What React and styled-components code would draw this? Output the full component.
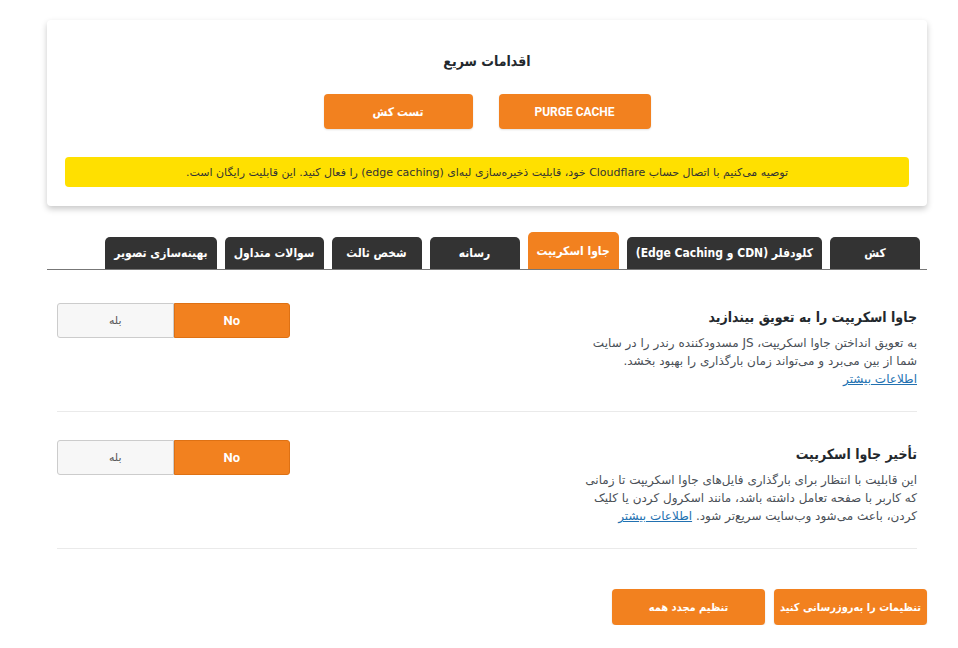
import React, { useState } from 'react';
import styled, { createGlobalStyle } from 'styled-components';

const GlobalStyle = createGlobalStyle`
    body {
        margin: 0;
        background: #ffffff;
        font-family: "DejaVu Sans", "Noto Sans", sans-serif;
    }
`;

const orange = '#f2811f';
const heading = '"DejaVu Sans Condensed", "DejaVu Sans", sans-serif';

const Page = styled.div`
    width: 880px;
    margin: 0 0 0 47px;
    padding-top: 20px;
    direction: rtl;
`;

const Card = styled.section`
    background: #fff;
    border-radius: 4px;
    box-shadow: 0 3px 6px rgba(0, 0, 0, 0.22);
    padding: 31px 18px 19px;
    display: flex;
    flex-direction: column;
    align-items: center;
`;

const CardTitle = styled.h2`
    margin: 0;
    font-family: ${heading};
    font-size: 14px;
    line-height: 20px;
    font-weight: bold;
    color: #23282d;
`;

const ActionRow = styled.div`
    display: flex;
    gap: 26px;
    margin-top: 23px;
`;

const ActionButton = styled.button`
    width: ${p => p.$w || 152}px;
    height: 35px;
    border: none;
    border-radius: 4px;
    background: ${orange};
    color: #fff;
    font-family: "Roboto", ${heading};
    font-weight: bold;
    font-size: 12px;
    box-shadow: 0 1px 2px rgba(0, 0, 0, 0.12);
    cursor: pointer;
`;

const Notice = styled.div`
    align-self: stretch;
    margin-top: 28px;
    height: 30px;
    background: #ffe000;
    border-radius: 4px;
    display: flex;
    align-items: center;
    justify-content: center;
    font-size: 11px;
    color: #333;
`;

const Tabs = styled.nav`
    margin-top: 26px;
    display: flex;
    align-items: flex-end;
    gap: 8px;
    padding-right: 7px;
    border-bottom: 1px solid #777;
`;

const Tab = styled.button`
    min-width: 90px;
    height: ${p => (p.$active ? 37 : 32)}px;
    padding: 0 9px;
    border: none;
    border-radius: 5px 5px 0 0;
    background: ${p => (p.$active ? orange : '#333333')};
    color: #fff;
    font-family: ${heading};
    font-weight: bold;
    font-size: 12px;
    white-space: nowrap;
    cursor: pointer;
`;

const Settings = styled.div`
    padding-top: 5px;
`;

const Row = styled.div`
    margin: 0 10px;
    padding: 28px 0 23px;
    border-bottom: 1px solid #eaeaea;
    display: flex;
    justify-content: space-between;
    align-items: flex-start;
`;

const Info = styled.div`
    width: 360px;
    padding-top: 4px;
`;

const Title = styled.h3`
    margin: 0;
    font-family: ${heading};
    font-size: 14px;
    line-height: 20px;
    font-weight: bold;
    color: #23282d;
`;

const Desc = styled.p`
    margin: 7px 0 0;
    font-size: 12px;
    line-height: 18px;
    color: #4a5057;
`;

const More = styled.a`
    color: #2271b1;
    text-decoration: underline;
`;

const Toggle = styled.div`
    display: flex;
    width: 233px;
    height: 35px;
`;

const ToggleHalf = styled.button`
    flex: 1;
    border: 1px solid ${p => (p.$on ? '#de7114' : '#cccccc')};
    border-radius: ${p => (p.$first ? '0 3px 3px 0' : '3px 0 0 3px')};
    background: ${p => (p.$on ? orange : '#f7f7f7')};
    color: ${p => (p.$on ? '#fff' : '#555')};
    font-family: "Roboto", "DejaVu Sans", sans-serif;
    font-weight: ${p => (p.$on ? 'bold' : 'normal')};
    font-size: ${p => (p.$on ? 13 : 11)}px;
    cursor: pointer;
`;

const Footer = styled.div`
    display: flex;
    gap: 9px;
    margin-top: 40px;
`;

const FooterButton = styled.button`
    width: 153px;
    height: 36px;
    padding: 0;
    border: none;
    border-radius: 4px;
    background: ${orange};
    color: #fff;
    font-family: ${heading};
    font-weight: bold;
    font-size: 11px;
    white-space: nowrap;
    box-shadow: 0 1px 2px rgba(0, 0, 0, 0.12);
    cursor: pointer;
`;

const tabs = [
    'کش',
    'کلودفلر (CDN و Edge Caching)',
    'جاوا اسکریپت',
    'رسانه',
    'شخص ثالث',
    'سوالات متداول',
    'بهینه‌سازی تصویر',
];

const SwitchField = ({ value, onChange }) => (
    <Toggle>
        <ToggleHalf $first $on={!value} onClick={() => onChange(false)}>No</ToggleHalf>
        <ToggleHalf $on={value} onClick={() => onChange(true)}>بله</ToggleHalf>
    </Toggle>
);

const App = () => {
    const [active, setActive] = useState(2);
    const [defer, setDefer] = useState(false);
    const [delay, setDelay] = useState(false);

    return <>
        <GlobalStyle />
        <Page>
            <Card>
                <CardTitle>اقدامات سریع</CardTitle>
                <ActionRow>
                    <ActionButton $w={152}>PURGE CACHE</ActionButton>
                    <ActionButton $w={149}>تست کش</ActionButton>
                </ActionRow>
                <Notice>توصیه می‌کنیم با اتصال حساب Cloudflare خود، قابلیت ذخیره‌سازی لبه‌ای (edge caching) را فعال کنید. این قابلیت رایگان است.</Notice>
            </Card>

            <Tabs>
                {tabs.map((t, i) => (
                    <Tab key={t} $active={i === active} onClick={() => setActive(i)}>{t}</Tab>
                ))}
            </Tabs>

            <Settings>
                <Row>
                    <Info>
                        <Title>جاوا اسکریپت را به تعویق بیندازید</Title>
                        <Desc>
                            به تعویق انداختن جاوا اسکریپت، JS مسدودکننده رندر را در سایت
                            <br />
                            شما از بین می‌برد و می‌تواند زمان بارگذاری را بهبود بخشد.
                            <br />
                            <More href="#">اطلاعات بیشتر</More>
                        </Desc>
                    </Info>
                    <SwitchField value={defer} onChange={setDefer} />
                </Row>
                <Row>
                    <Info>
                        <Title>تأخیر جاوا اسکریپت</Title>
                        <Desc>
                            این قابلیت با انتظار برای بارگذاری فایل‌های جاوا اسکریپت تا زمانی
                            <br />
                            که کاربر با صفحه تعامل داشته باشد، مانند اسکرول کردن یا کلیک
                            <br />
                            کردن، باعث می‌شود وب‌سایت سریع‌تر شود. <More href="#">اطلاعات بیشتر</More>
                        </Desc>
                    </Info>
                    <SwitchField value={delay} onChange={setDelay} />
                </Row>
            </Settings>

            <Footer>
                <FooterButton>تنظیمات را به‌روزرسانی کنید</FooterButton>
                <FooterButton>تنظیم مجدد همه</FooterButton>
            </Footer>
        </Page>
    </>;
};

export default App;
